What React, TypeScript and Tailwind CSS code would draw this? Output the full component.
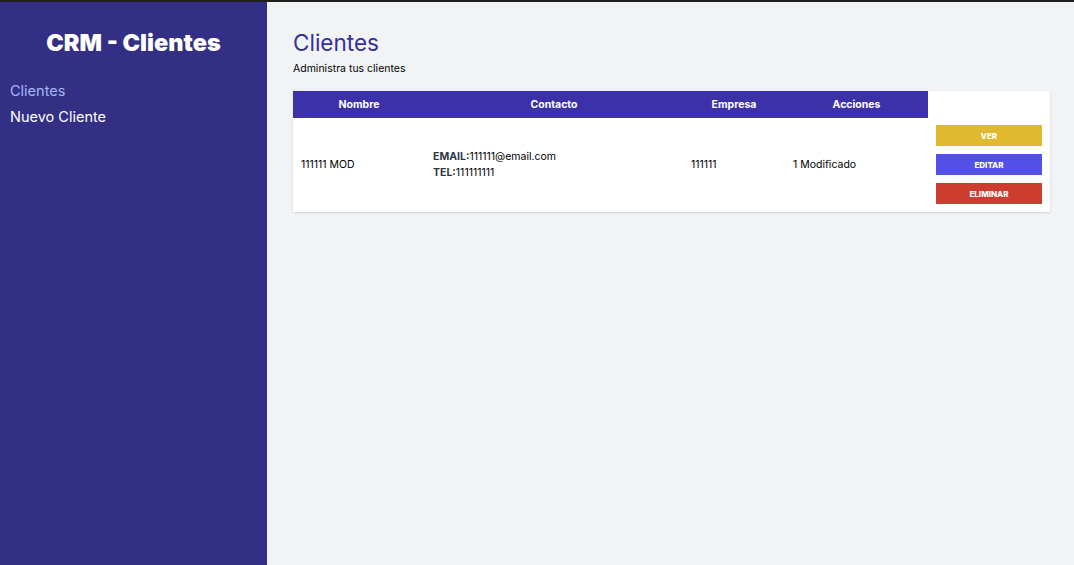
const clientes = [
    { id: 1, nombre: '111111 MOD', email: '111111@email.com', telefono: '111111111', empresa: '111111', notas: '1 Modificado' },
];

export default function App() {
    return (
        <div className="min-h-screen flex flex-col font-['Inter',sans-serif] border-t-2 border-[#1f1f1f]">
            <div className="flex flex-1 min-h-[563px]">
                <aside className="w-[267px] bg-[#322f85] px-[10px] pt-[25px]">
                    <h2 className="text-[23.5px] leading-8 font-black text-white text-center">CRM - Clientes</h2>
                    <nav className="mt-[19px] flex flex-col">
                        <a href="#" className="text-[14.5px] leading-[26px] text-[#a5b8f5]">Clientes</a>
                        <a href="#" className="text-[14.5px] leading-[26px] text-white">Nuevo Cliente</a>
                    </nav>
                </aside>
                <main className="flex-1 bg-[#f2f3f5] pl-[26px] pr-[24px] pt-[25px]">
                    <h2 className="text-[22.5px] leading-8 text-[#33309a]">Clientes</h2>
                    <p className="text-[10.5px] leading-5 text-black">Administra tus clientes</p>

                    <table className="mt-[12px] w-full table-auto bg-white shadow">
                        <thead className="bg-[#3d31aa] text-white text-[10.5px]">
                            <tr>
                                <th className="h-[27px] font-bold">Nombre</th>
                                <th className="font-bold">Contacto</th>
                                <th className="font-bold">Empresa</th>
                                <th className="font-bold">Acciones</th>
                            </tr>
                        </thead>
                        <tbody>
                            {clientes.map(cliente => (
                                <tr key={cliente.id} className="text-[10.5px] text-black">
                                    <td className="w-[132px] p-2">{cliente.nombre}</td>
                                    <td className="w-[258px] p-2 leading-4">
                                        <p><span className="font-bold text-[#2d3748] uppercase">Email:</span>{cliente.email}</p>
                                        <p><span className="font-bold text-[#2d3748] uppercase">Tel:</span>{cliente.telefono}</p>
                                    </td>
                                    <td className="w-[102px] p-2">{cliente.empresa}</td>
                                    <td className="w-[143px] p-2">{cliente.notas}</td>
                                    <td className="w-[122px] px-2 pt-[7px] pb-2">
                                        <div className="flex flex-col gap-2">
                                            <button className="h-[21px] bg-[#dfb92f] text-white text-[8px] font-extrabold uppercase">Ver</button>
                                            <button className="h-[21px] bg-[#5250e6] text-white text-[8px] font-extrabold uppercase">Editar</button>
                                            <button className="h-[21px] bg-[#cc3d30] text-white text-[8px] font-extrabold uppercase">Eliminar</button>
                                        </div>
                                    </td>
                                </tr>
                            ))}
                        </tbody>
                    </table>
                </main>
            </div>
        </div>
    );
}
